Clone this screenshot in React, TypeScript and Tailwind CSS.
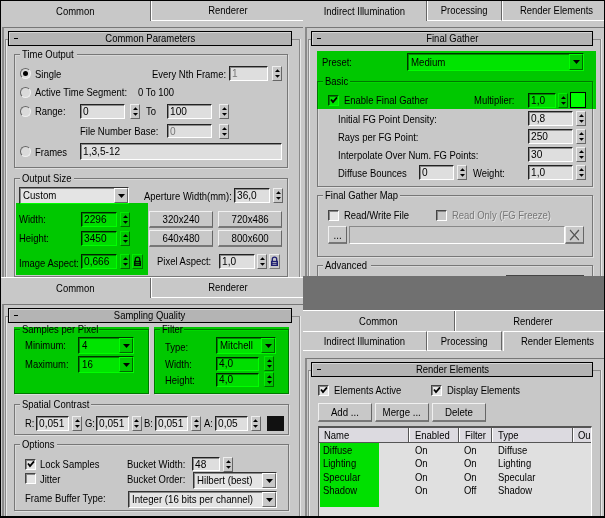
import type { ReactNode } from "react";
import clsx from "clsx";

type BoxProps = { className?: string; children?: ReactNode };

// Narrow UI text, squeezed the way the old system font is
function Text({ className, children }: BoxProps) {
    return (
        <span className={clsx("block shrink-0 whitespace-nowrap leading-[14px]", className)}>
            <span className="inline-block origin-left scale-x-[0.86]">{children}</span>
        </span>
    );
}

function CenterText({ className, children }: BoxProps) {
    return (
        <span className={clsx("flex shrink-0 items-center justify-center whitespace-nowrap", className)}>
            <span className="inline-block scale-x-[0.86]">{children}</span>
        </span>
    );
}

function Row({ className, children }: BoxProps) {
    return <div className={clsx("flex shrink-0 items-center", className)}>{children}</div>;
}

function Radio({ checked = false }: { checked?: boolean }) {
    return (
        <span className="flex h-[11px] w-[11px] shrink-0 items-center justify-center rounded-full border border-b-[#eee] border-l-[#666] border-r-[#eee] border-t-[#666] bg-[#dadada]">
            {checked && <span className="h-[5px] w-[5px] rounded-full bg-black" />}
        </span>
    );
}

function Check({ checked = false, disabled = false, className }: { checked?: boolean; disabled?: boolean; className?: string }) {
    return (
        <span
            className={clsx(
                "flex h-[11px] w-[11px] shrink-0 items-center justify-center border border-b-white border-l-[#444] border-r-white border-t-[#444] shadow-[inset_1px_1px_0_#888]",
                disabled ? "bg-[#c8c8c8]" : "bg-[#e4e4e4]",
                className
            )}
        >
            {checked && (
                <svg viewBox="0 0 8 8" className="h-[8px] w-[8px]">
                    <path d="M1 3.5 L3 6 L7 1.3" fill="none" stroke="#000" strokeWidth="1.8" />
                </svg>
            )}
        </span>
    );
}

function Field({ className, children, disabled = false }: BoxProps & { disabled?: boolean }) {
    return (
        <span
            className={clsx(
                "flex shrink-0 items-center border border-b-white border-l-[#222] border-r-white border-t-[#222] bg-[#dedede] pl-[2px] shadow-[inset_1px_1px_0_#8a8a8a]",
                disabled && "text-[#777]",
                className
            )}
        >
            <span className="inline-block origin-left scale-x-[0.92] whitespace-nowrap leading-[11px]">{children}</span>
        </span>
    );
}

function Spinner({ className }: { className?: string }) {
    return (
        <span
            className={clsx(
                "flex h-[15px] w-[10px] shrink-0 items-center justify-center border border-b-[#666] border-l-[#eee] border-r-[#666] border-t-[#eee]",
                className
            )}
        >
            <svg viewBox="0 0 7 11" className="h-[11px] w-[7px]">
                <path d="M1 4 L3.5 1.2 L6 4Z M1 7 L3.5 9.8 L6 7Z" fill="#000" />
            </svg>
        </span>
    );
}

function Combo({ className, children }: BoxProps) {
    return (
        <span
            className={clsx(
                "flex shrink-0 items-center border border-b-white border-l-[#333] border-r-white border-t-[#333] bg-[#e4e4e4] pl-[3px] shadow-[inset_1px_1px_0_#8a8a8a]",
                className
            )}
        >
            <span className="inline-block w-0 flex-1 origin-left scale-x-[0.88] whitespace-nowrap leading-[13px]">{children}</span>
            <span className="flex h-full w-[14px] shrink-0 items-center justify-center border border-b-[#666] border-l-white border-r-[#666] border-t-white bg-[#c8c8c8]">
                <svg viewBox="0 0 7 4" className="h-[4px] w-[7px]">
                    <path d="M0 0 H7 L3.5 4Z" fill="#000" />
                </svg>
            </span>
        </span>
    );
}

function Button({ className, children }: BoxProps) {
    return (
        <button
            className={clsx(
                "flex shrink-0 items-center justify-center whitespace-nowrap border border-b-2 border-b-[#777] border-l-[#f0f0f0] border-r-[#666] border-t-[#f0f0f0] bg-[#c8c8c8] leading-[12px]",
                className
            )}
        >
            <span className="inline-block scale-x-[0.88]">{children}</span>
        </button>
    );
}

function LockIcon({ className, color }: { className?: string; color: string }) {
    return (
        <span className={clsx("flex h-[15px] w-[11px] shrink-0 items-center justify-center border border-b-[#777] border-l-[#eee] border-r-[#777] border-t-[#eee]", className)}>
            <svg viewBox="0 0 9 11" className="h-[11px] w-[9px]">
                <path d="M2.3 5 V3.2 Q2.3 1.2 4.5 1.2 Q6.7 1.2 6.7 3.2 V5" fill="none" stroke={color} strokeWidth="1.3" />
                <rect x="1" y="4.8" width="7" height="5.2" fill={color} />
                <path d="M2.5 6.5 H6.5 M2.5 8.3 H6.5" stroke="#c8c8c8" strokeWidth="0.8" />
            </svg>
        </span>
    );
}

// legend: width of the title's gap in the top border
function Group({ title, legend, className, children }: BoxProps & { title: string; legend: string }) {
    return (
        <section className={clsx("flex shrink-0 flex-col border border-[#777] shadow-[inset_1px_1px_0_#d8d8d8,1px_1px_0_#dedede]", className)}>
            <h3 className={clsx("ml-[5px] mt-[-8px] h-[14px] shrink-0 bg-[#c8c8c8] pl-[2px]", legend)}>
                <Text>{title}</Text>
            </h3>
            {children}
        </section>
    );
}

function Rollout({ title, className, children }: BoxProps & { title: string }) {
    return (
        <div className={clsx("flex flex-1 flex-col overflow-hidden border-l-2 border-t border-l-[#8a8a8a] border-t-[#777] pl-px", className)}>
            <h2 className="relative z-10 ml-[3px] mr-[11px] mt-[3px] flex h-[15px] shrink-0 items-center border border-black bg-[#b4b4b4] shadow-[inset_1px_1px_0_#d4d4d4]">
                <span className="ml-[5px] h-px w-[4px] bg-black" />
                <CenterText className="mr-[9px] flex-1">{title}</CenterText>
            </h2>
            <div className="-mt-[7px] mr-[3px] flex flex-1 flex-col border-x border-t border-[#8a8a8a] pt-[6px] shadow-[inset_1px_0_0_#e8e8e8,1px_0_0_#e8e8e8]">
                {children}
            </div>
        </div>
    );
}

function CommonTabs() {
    return (
        <nav className="flex h-[20px] shrink-0">
            <CenterText className="w-[150px] border-r border-[#666]">Common</CenterText>
            <CenterText className="flex-1 border-b border-l border-white">Renderer</CenterText>
        </nav>
    );
}

function CommonPanel() {
    return (
        <div className="flex h-[276px] flex-col overflow-hidden bg-[#c8c8c8]">
            <CommonTabs />
            <Rollout title="Common Parameters" className="ml-px mt-[6px]">
                <Group title="Time Output" legend="w-[57px]" className="ml-[8px] mt-[8px] h-[114px] w-[274px]">
                    <Row className="mt-[5px] h-[15px] pl-[5px]">
                        <Radio checked />
                        <Text className="ml-[4px] w-[117px]">Single</Text>
                        <Text className="w-[77px]">Every Nth Frame:</Text>
                        <Field disabled className="h-[15px] w-[39px]">1</Field>
                        <Spinner className="ml-[4px]" />
                    </Row>
                    <Row className="mt-[3px] h-[16px] pl-[5px]">
                        <Radio />
                        <Text className="ml-[4px] w-[103px]">Active Time Segment:</Text>
                        <Text>0 To 100</Text>
                    </Row>
                    <Row className="mt-[3px] h-[16px] pl-[5px]">
                        <Radio />
                        <Text className="ml-[4px] w-[45px]">Range:</Text>
                        <Field className="h-[15px] w-[45px]">0</Field>
                        <Spinner className="ml-[5px]" />
                        <Text className="ml-[6px] w-[21px]">To</Text>
                        <Field className="h-[15px] w-[45px]">100</Field>
                        <Spinner className="ml-[7px]" />
                    </Row>
                    <Row className="mt-[4px] h-[16px] pl-[65px]">
                        <Text className="w-[87px]">File Number Base:</Text>
                        <Field disabled className="h-[14px] w-[45px]">0</Field>
                        <Spinner className="ml-[7px]" />
                    </Row>
                    <Row className="mt-[4px] h-[17px] pl-[5px]">
                        <Radio />
                        <Text className="ml-[4px] w-[45px]">Frames</Text>
                        <Field className="h-[17px] w-[202px]">1,3,5-12</Field>
                    </Row>
                </Group>
                <Group title="Output Size" legend="w-[54px]" className="ml-[8px] mt-[10px] h-[99px] w-[274px]">
                    <Row className="mt-[2px] h-[17px] pl-[4px]">
                        <Combo className="h-[17px] w-[110px]">Custom</Combo>
                        <Text className="ml-[15px] w-[90px]">Aperture Width(mm):</Text>
                        <Field className="h-[15px] w-[36px]">36,0</Field>
                        <Spinner className="ml-[3px]" />
                    </Row>
                    <Row className="mt-[6px] h-[18px] pl-[4px]">
                        <Text className="w-[62px]">Width:</Text>
                        <Field className="h-[15px] w-[36px]">2296</Field>
                        <Spinner className="ml-[3px]" />
                        <Button className="ml-[19px] h-[17px] w-[64px]">320x240</Button>
                        <Button className="ml-[5px] h-[17px] w-[64px]">720x486</Button>
                    </Row>
                    <Row className="mt-px h-[18px] pl-[4px]">
                        <Text className="w-[62px]">Height:</Text>
                        <Field className="h-[15px] w-[36px]">3450</Field>
                        <Spinner className="ml-[3px]" />
                        <Button className="ml-[19px] h-[17px] w-[64px]">640x480</Button>
                        <Button className="ml-[5px] h-[17px] w-[64px]">800x600</Button>
                    </Row>
                    <Row className="mt-[5px] h-[18px] pl-[4px]">
                        <Text className="w-[62px] pt-[3px]">Image Aspect:</Text>
                        <Field className="h-[15px] w-[36px]">0,666</Field>
                        <Spinner className="ml-[3px]" />
                        <LockIcon className="ml-[2px]" color="#111" />
                        <Text className="ml-[14px] w-[62px]">Pixel Aspect:</Text>
                        <Field className="h-[15px] w-[36px]">1,0</Field>
                        <Spinner className="ml-[2px]" />
                        <LockIcon className="ml-[2px]" color="#1c1c70" />
                    </Row>
                </Group>
            </Rollout>
        </div>
    );
}

function SamplingPanel() {
    const channels = [
        { name: "R:", value: "0,051" },
        { name: "G:", value: "0,051" },
        { name: "B:", value: "0,051" },
        { name: "A:", value: "0,05" },
    ];

    return (
        <div className="flex h-[239px] flex-col overflow-hidden border-t border-white bg-[#c8c8c8]">
            <CommonTabs />
            <Rollout title="Sampling Quality" className="ml-px mt-[6px]">
                <div className="ml-[8px] mt-[6px] flex shrink-0 gap-[5px]">
                    <Group title="Samples per Pixel" legend="w-[79px]" className="h-[65px] w-[135px]">
                        <Row className="mt-px h-[17px] pl-[10px]">
                            <Text className="mb-[2px] w-[53px]">Minimum:</Text>
                            <Combo className="h-[17px] w-[56px]">4</Combo>
                        </Row>
                        <Row className="mt-[2px] h-[17px] pl-[10px]">
                            <Text className="mb-[2px] w-[53px]">Maximum:</Text>
                            <Combo className="h-[17px] w-[56px]">16</Combo>
                        </Row>
                    </Group>
                    <Group title="Filter" legend="w-[24px]" className="h-[65px] w-[135px]">
                        <Row className="mt-px h-[17px] pl-[10px]">
                            <Text className="w-[51px] pt-[2px]">Type:</Text>
                            <Combo className="h-[17px] w-[60px]">Mitchell</Combo>
                        </Row>
                        <Row className="mt-[2px] h-[15px] pl-[10px]">
                            <Text className="w-[51px]">Width:</Text>
                            <Field className="h-[14px] w-[43px]">4,0</Field>
                            <Spinner className="ml-[5px]" />
                        </Row>
                        <Row className="mt-px h-[15px] pl-[10px]">
                            <Text className="w-[51px]">Height:</Text>
                            <Field className="h-[14px] w-[43px]">4,0</Field>
                            <Spinner className="ml-[5px]" />
                        </Row>
                    </Group>
                </div>
                <Group title="Spatial Contrast" legend="w-[71px]" className="ml-[8px] mt-[10px] h-[31px] w-[275px]">
                    <Row className="mt-[4px] h-[16px] pl-[10px]">
                        {channels.map((c) => (
                            <span key={c.name} className="flex w-[59.5px] shrink-0 items-center">
                                <Text className="w-[11px]">{c.name}</Text>
                                <Field className="h-[15px] w-[33px]">{c.value}</Field>
                                <Spinner className="ml-[3px]" />
                            </span>
                        ))}
                        <span className="ml-[4px] h-[15px] w-[17px] bg-[#111]" />
                    </Row>
                </Group>
                <Group title="Options" legend="w-[37px]" className="ml-[8px] mt-[9px] h-[67px] w-[275px]">
                    <Row className="mt-[5px] h-[16px] pl-[10px]">
                        <Check checked />
                        <Text className="ml-[4px] w-[87px]">Lock Samples</Text>
                        <Text className="w-[65px]">Bucket Width:</Text>
                        <Field className="h-[14px] w-[28px]">48</Field>
                        <Spinner className="ml-[3px]" />
                    </Row>
                    <Row className="h-[17px] pl-[10px]">
                        <Check className="mb-[4px]" />
                        <Text className="mb-[4px] ml-[4px] w-[87px]">Jitter</Text>
                        <Text className="mb-[4px] w-[66px]">Bucket Order:</Text>
                        <Combo className="h-[17px] w-[84px]">Hilbert (best)</Combo>
                    </Row>
                    <Row className="mt-[2px] h-[17px] pl-[10px]">
                        <Text className="mb-[3px] w-[103px]">Frame Buffer Type:</Text>
                        <Combo className="h-[17px] w-[149px]">Integer (16 bits per channel)</Combo>
                    </Row>
                </Group>
            </Rollout>
        </div>
    );
}

function FinalGatherPanel() {
    const params = [
        { label: "Initial FG Point Density:", value: "0,8" },
        { label: "Rays per FG Point:", value: "250" },
        { label: "Interpolate Over Num. FG Points:", value: "30" },
    ];

    return (
        <div className="flex h-[275px] flex-col overflow-hidden bg-[#c8c8c8]">
            <nav className="flex h-[20px] shrink-0">
                <CenterText className="w-[124px] border-r border-[#666]">Indirect Illumination</CenterText>
                <CenterText className="w-[75px] border-b border-l border-r border-b-white border-l-white border-r-[#666]">Processing</CenterText>
                <CenterText className="flex-1 border-b border-l border-white pl-[6px]">Render Elements</CenterText>
            </nav>
            <Rollout title="Final Gather" className="ml-[2px] mt-[6px]">
                <Row className="mt-[7px] h-[18px] pl-[13px]">
                    <Text className="w-[85px]">Preset:</Text>
                    <Combo className="h-[18px] w-[177px]">Medium</Combo>
                </Row>
                <Group title="Basic" legend="w-[27px]" className="ml-[8px] mt-[10px] h-[106px] w-[276px]">
                    <Row className="mt-[4px] h-[16px] pl-[10px]">
                        <Check checked />
                        <Text className="ml-[5px] w-[130px]">Enable Final Gather</Text>
                        <Text className="w-[54px]">Multiplier:</Text>
                        <Field className="h-[15px] w-[28px]">1,0</Field>
                        <Spinner className="ml-[2px]" />
                        <span className="ml-[2px] h-[16px] w-[16px] border border-black bg-white" />
                    </Row>
                    <div className="mt-[3px] flex shrink-0 flex-col gap-[3px]">
                        {params.map((p) => (
                            <Row key={p.label} className="h-[15px] pl-[20px]">
                                <Text className="w-[190px]">{p.label}</Text>
                                <Field className="h-[15px] w-[45px]">{p.value}</Field>
                                <Spinner className="ml-[3px]" />
                            </Row>
                        ))}
                        <Row className="h-[15px] pl-[20px]">
                            <Text className="w-[81px]">Diffuse Bounces</Text>
                            <Field className="h-[15px] w-[35px]">0</Field>
                            <Spinner className="ml-[3px]" />
                            <Text className="ml-[6px] w-[55px]">Weight:</Text>
                            <Field className="h-[15px] w-[45px]">1,0</Field>
                            <Spinner className="ml-[3px]" />
                        </Row>
                    </div>
                </Group>
                <Group title="Final Gather Map" legend="w-[77px]" className="ml-[8px] mt-[8px] h-[62px] w-[276px]">
                    <Row className="mt-[6px] h-[14px] pl-[10px]">
                        <Check />
                        <Text className="ml-[5px] w-[92px]">Read/Write File</Text>
                        <Check disabled />
                        <Text className="ml-[5px] text-[#777] [text-shadow:1px_1px_0_#e4e4e4]">Read Only (FG Freeze)</Text>
                    </Row>
                    <Row className="mt-[4px] h-[18px] pl-[10px]">
                        <Button className="h-[18px] w-[19px]">...</Button>
                        <span className="ml-[2px] h-[18px] w-[216px] border border-b-white border-l-[#888] border-r-white border-t-[#888]" />
                        <Button className="h-[18px] w-[19px]">
                            <svg viewBox="0 0 12 12" className="h-[12px] w-[13px]">
                                <path d="M2 1 L12 10.5" stroke="#fff" strokeWidth="0.6" />
                                <path d="M1 1 L11 11 M11 1 L1 11" stroke="#555" strokeWidth="1.5" />
                            </svg>
                        </Button>
                    </Row>
                </Group>
                <Group title="Advanced" legend="w-[48px]" className="ml-[8px] mt-[8px] h-[30px] w-[276px]">
                    <span className="ml-[188px] mt-[3px] h-[2px] w-[78px] bg-[#444]" />
                </Group>
            </Rollout>
        </div>
    );
}

function ElementsPanel() {
    const elements = [
        { name: "Diffuse", filter: "On" },
        { name: "Lighting", filter: "On" },
        { name: "Specular", filter: "On" },
        { name: "Shadow", filter: "Off" },
    ];

    return (
        <div className="flex h-[206px] flex-col overflow-hidden border-t border-white bg-[#c8c8c8]">
            <nav className="flex h-[20px] shrink-0">
                <CenterText className="w-[152px] border-r border-[#666]">Common</CenterText>
                <CenterText className="flex-1 border-l border-white pl-[6px]">Renderer</CenterText>
            </nav>
            <nav className="flex h-[20px] shrink-0">
                <CenterText className="w-[124px] border-b border-r border-t border-b-white border-r-[#666] border-t-white">Indirect Illumination</CenterText>
                <CenterText className="w-[75px] border border-b-white border-l-white border-r-[#666] border-t-white">Processing</CenterText>
                <CenterText className="ml-px flex-1 border-l border-t border-white pl-[6px]">Render Elements</CenterText>
            </nav>
            <Rollout title="Render Elements" className="ml-[2px] mt-[7px]">
                <Row className="mt-[5px] h-[16px] pl-[9px]">
                    <Check checked />
                    <Text className="ml-[5px] w-[97px]">Elements Active</Text>
                    <Check checked />
                    <Text className="ml-[5px]">Display Elements</Text>
                </Row>
                <Row className="mt-[5px] gap-[3px] pl-[9px]">
                    <Button className="h-[19px] w-[54px]">Add ...</Button>
                    <Button className="h-[19px] w-[54px]">Merge ...</Button>
                    <Button className="h-[19px] w-[54px]">Delete</Button>
                </Row>
                <div className="ml-[9px] mt-[4px] flex w-[274px] flex-1 flex-col overflow-hidden border-l border-r border-t-2 border-l-[#555] border-r-white border-t-[#555] bg-[#e0e0e0]">
                    <div className="flex h-[15px] shrink-0 overflow-hidden border-b border-[#555] bg-[#dcdae0]">
                        <Text className="w-[90px] border-r border-[#555] pl-[5px]">Name</Text>
                        <Text className="w-[50px] border-l border-r border-l-white border-r-[#555] pl-[5px]">Enabled</Text>
                        <Text className="w-[33px] border-l border-r border-l-white border-r-[#555] pl-[5px]">Filter</Text>
                        <Text className="w-[81px] border-l border-r border-l-white border-r-[#555] pl-[5px]">Type</Text>
                        <Text className="w-[18px] border-l border-white pl-[4px]">Ou</Text>
                    </div>
                    {elements.map((el) => (
                        <Row key={el.name} className="h-[13.5px] pl-[4px]">
                            <Text className="w-[92px]">{el.name}</Text>
                            <Text className="w-[49px]">On</Text>
                            <Text className="w-[34px]">{el.filter}</Text>
                            <Text>{el.name}</Text>
                        </Row>
                    ))}
                </div>
            </Rollout>
        </div>
    );
}

// Marker pen areas: green multiplied over the controls below
function Marker({ className }: { className: string }) {
    return <div className={clsx("pointer-events-none absolute bg-[#00ff00] mix-blend-multiply", className)} />;
}

export default function App() {
    return (
        <div className="relative flex h-[518px] w-[605px] overflow-hidden bg-black pl-px pt-px font-['Liberation_Sans',Arial,sans-serif] text-[11px] text-black">
            <div className="flex w-[302px] flex-col">
                <CommonPanel />
                <SamplingPanel />
            </div>
            <div className="flex w-[301px] flex-col">
                <FinalGatherPanel />
                <div className="h-[34px] shrink-0 bg-[#707070]" />
                <ElementsPanel />
            </div>

            <Marker className="left-[16px] top-[203px] h-[72px] w-[132px]" />
            <Marker className="left-[14px] top-[327px] h-[67px] w-[135px]" />
            <Marker className="left-[154px] top-[327px] h-[67px] w-[135px]" />
            <Marker className="left-[317px] top-[51px] h-[58px] w-[279px]" />
            <Marker className="left-[320px] top-[443px] h-[64px] w-[59px]" />
        </div>
    );
}
